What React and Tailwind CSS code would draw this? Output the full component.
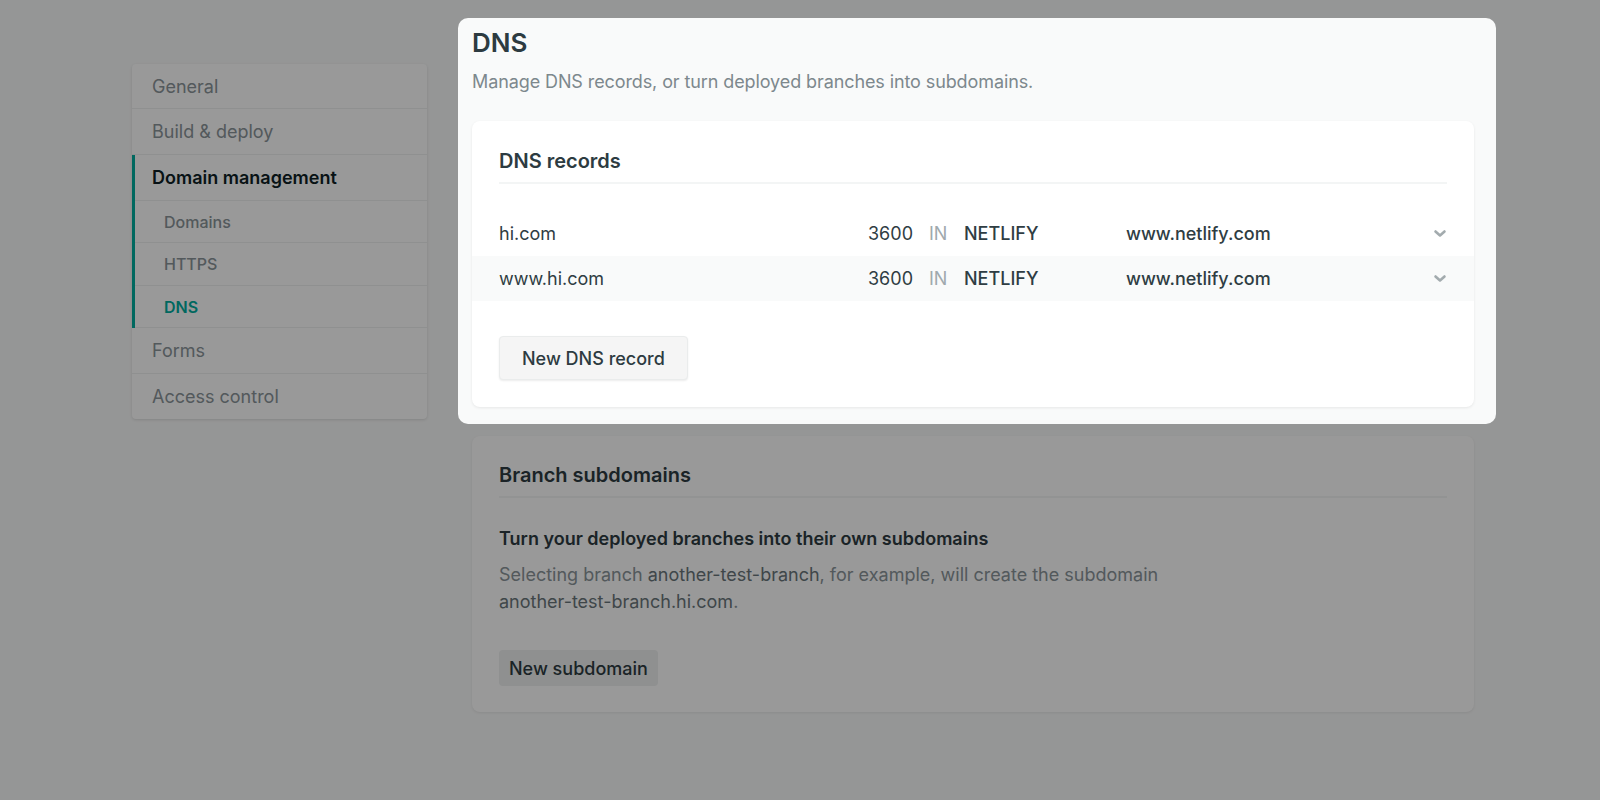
const records = [
  { name: "hi.com", ttl: "3600", type: "NETLIFY", value: "www.netlify.com" },
  { name: "www.hi.com", ttl: "3600", type: "NETLIFY", value: "www.netlify.com" },
];

function Chevron() {
  return (
    <svg width="14" height="9" viewBox="0 0 14 9" fill="none">
      <path d="M2.5 2.5l4.5 4L11.5 2.5" stroke="#a3abae" strokeWidth="2.6" strokeLinecap="round" strokeLinejoin="round" />
    </svg>
  );
}

export default function App() {
  return (
    <div className="min-h-screen bg-[#f9fafa] font-['Inter',sans-serif] text-[#2f3d43]">
      <div className="ml-[132px] w-[1342px] flex gap-[45px] pt-[28px]">

        {/* SIDEBAR */}
        <div className="w-[295px] mt-[36px] self-start bg-white rounded-[4px] shadow-[0_1px_3px_rgba(0,0,0,0.12)] overflow-hidden">
          <div className="h-[45px] flex items-center pl-[20px] border-b border-[#eef0f0] text-[18px] text-[#8a9499]">General</div>
          <div className="h-[46px] flex items-center pl-[20px] border-b border-[#eef0f0] text-[18px] text-[#8a9499]">Build &amp; deploy</div>
          <div className="border-l-[3px] border-[#00ad9f]">
            <div className="h-[46px] flex items-center pl-[17px] border-b border-[#eef0f0] text-[18px] font-semibold text-[#0e1e25]">Domain management</div>
            <div className="h-[42px] flex items-center pl-[29px] border-b border-[#eef0f0] text-[16px] font-medium text-[#8a9499]">Domains</div>
            <div className="h-[43px] flex items-center pl-[29px] border-b border-[#eef0f0] text-[16px] font-medium text-[#8a9499]">HTTPS</div>
            <div className="h-[42px] flex items-center pl-[29px] border-b border-[#eef0f0] text-[16px] font-semibold text-[#00ad9f]">DNS</div>
          </div>
          <div className="h-[46px] flex items-center pl-[20px] border-b border-[#eef0f0] text-[18px] text-[#8a9499]">Forms</div>
          <div className="h-[45px] flex items-center pl-[20px] text-[18px] text-[#8a9499]">Access control</div>
        </div>

        {/* MAIN */}
        <div className="flex-1">

          {/* HIGHLIGHTED DNS SECTION */}
          <div className="relative z-10 -ml-[14px] -mr-[22px] -mt-[10px] pl-[14px] pr-[22px] pt-[10px] pb-[17px] rounded-[10px] bg-[#f9fafa] shadow-[0_0_0_9999px_rgba(0,0,0,0.4)]">
            <h1 className="text-[26px] leading-[30px] font-semibold text-[#2d3b41]">DNS</h1>
            <p className="mt-[12px] text-[18px] leading-[24px] tracking-[-0.1px] text-[#7d888d]">
              Manage DNS records, or turn deployed branches into subdomains.
            </p>

            <div className="mt-[27px] bg-white rounded-[8px] shadow-[0_1px_3px_rgba(0,0,0,0.08)] pt-[27px] pb-[27px]">
              <h2 className="mx-[27px] pb-[8px] border-b-2 border-[#f3f5f5] text-[20px] leading-[26px] font-semibold text-[#2d3b41]">
                DNS records
              </h2>

              <div className="mt-[27px]">
                {records.map((r, i) => (
                  <div
                    key={r.name}
                    className={`h-[45px] flex items-center px-[27px] text-[18px] ${i % 2 === 1 ? "bg-[#f9fafa]" : ""}`}
                  >
                    <div className="w-[369px]">{r.name}</div>
                    <div className="w-[44px] text-right">{r.ttl}</div>
                    <div className="ml-[17px] w-[35px] text-[#a0a9ad]">IN</div>
                    <div className="w-[162px] font-medium">{r.type}</div>
                    <div className="flex-1 font-medium">{r.value}</div>
                    <Chevron />
                  </div>
                ))}
              </div>

              <button className="ml-[27px] mt-[35px] h-[44px] px-[22px] rounded-[4px] bg-[#f5f5f5] border border-[#eaecec] shadow-[0_1px_2px_rgba(0,0,0,0.08)] text-[18px] font-medium text-[#2d3b41]">
                New DNS record
              </button>
            </div>
          </div>

          {/* BRANCH SUBDOMAINS */}
          <div className="mt-[12px] bg-white rounded-[8px] shadow-[0_1px_3px_rgba(0,0,0,0.08)] px-[27px] pt-[26px] pb-[26px]">
            <h2 className="pb-[8px] border-b-2 border-[#f3f5f5] text-[20px] leading-[26px] font-semibold text-[#2d3b41]">
              Branch subdomains
            </h2>
            <h3 className="mt-[28px] text-[18px] leading-[26px] font-semibold text-[#2d3b41]">
              Turn your deployed branches into their own subdomains
            </h3>
            <p className="mt-[9px] max-w-[720px] text-[18px] leading-[27px] text-[#8a9499]">
              Selecting branch <span className="text-[#6a767b]">another-test-branch</span>, for example, will create the subdomain <span className="whitespace-nowrap text-[#6a767b]">another-test-branch.hi.com</span>.
            </p>
            <button className="mt-[35px] h-[36px] px-[10px] rounded-[4px] bg-[#eef0f0] text-[18px] font-medium text-[#2d3b41]">
              New subdomain
            </button>
          </div>
        </div>
      </div>
    </div>
  );
}
